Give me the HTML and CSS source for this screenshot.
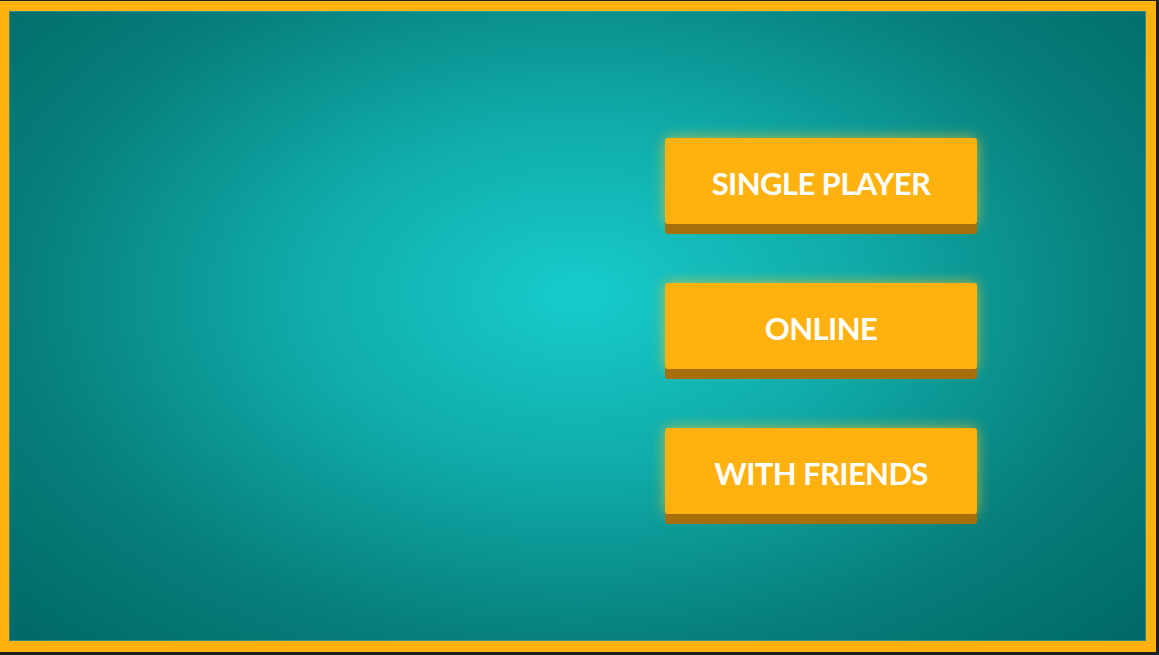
FILE: index.html
```html
<!DOCTYPE html>
<html lang="en">

<head>
    <meta charset="UTF-8">
    <meta name="viewport" content="width=device-width, initial-scale=1.0">
    <title>Menu</title>
    <link rel="stylesheet" href="styles.css">
</head>

<body>
    <div class="frame">
        <div class="menu">
            <button class="btn">Single Player</button>
            <button class="btn">Online</button>
            <button class="btn">With Friends</button>
        </div>
    </div>
</body>

</html>
```

FILE: styles.css
```css
/* General styles */
body {
    margin: 0;
    background-color: #1f1f1f;
    font-family: Lato, "Noto Sans", sans-serif;
    overflow: hidden;
}

.frame {
    margin-top: 1px;
    width: 1156px;
    height: 651px;
    box-sizing: border-box;
    border-style: solid;
    border-color: #ffb20f;
    border-width: 10px 10px 11px 9px;
    background: radial-gradient(ellipse 70% 80% at 50% 45%, #17cccc 0%, #10aba9 35%, #077e7b 70%, #006864 100%);
    box-shadow: inset 0 0 0 1px rgba(255, 255, 255, 0.18);
    display: flex;
    justify-content: flex-end;
    align-items: flex-start;
    padding: 127px 169px 0 0;
}

.menu {
    display: flex;
    flex-direction: column;
    gap: 49px;
}

.btn {
    width: 312px;
    height: 86px;
    margin-bottom: 10px;
    padding: 4px 0 0;
    background-color: #ffb20f;
    color: #fff;
    border: none;
    border-radius: 3px;
    font-family: Lato, "Noto Sans", sans-serif;
    font-weight: 700;
    font-size: 31px;
    letter-spacing: -0.6px;
    text-transform: uppercase;
    cursor: pointer;
    box-shadow: 0 10px 0 #a66f0c, 0 0 14px rgba(255, 195, 30, 0.7);
}

.btn:hover {
    background-color: #ffbb2a;
}
```
